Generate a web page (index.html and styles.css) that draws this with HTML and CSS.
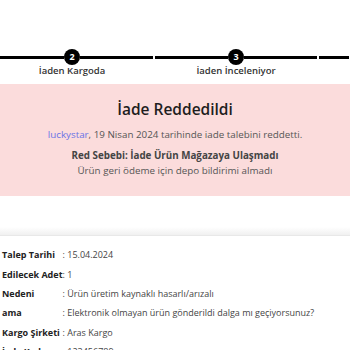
FILE: index.html
```html
<!DOCTYPE html>
<html lang="tr">
  <head>
    <meta charset="UTF-8" />
    <title>İade Detayı</title>
    <link rel="stylesheet" href="styles.css">
  </head>
  <body>
    <div class="steps">
      <div class="step">
        <div class="track">
          <span class="line"></span>
          <span class="dot">2</span>
          <span class="line"></span>
        </div>
        <div class="step-label">İaden Kargoda</div>
      </div>
      <div class="step">
        <div class="track">
          <span class="line"></span>
          <span class="dot">3</span>
          <span class="line"></span>
        </div>
        <div class="step-label">İaden İnceleniyor</div>
      </div>
      <div class="step step-last">
        <div class="track">
          <span class="line"></span>
        </div>
      </div>
    </div>

    <div class="rejected">
      <h2>İade Reddedildi</h2>
      <p class="who"><a href="#">luckystar</a>, 19 Nisan 2024 tarihinde iade talebini reddetti.</p>
      <p class="reason-title">Red Sebebi: İade Ürün Mağazaya Ulaşmadı</p>
      <p class="reason">Ürün geri ödeme için depo bildirimi almadı</p>
    </div>

    <div class="divider"></div>

    <table class="details">
      <tr><th>Talep Tarihi</th><td>: 15.04.2024</td></tr>
      <tr><th>Edilecek Adet</th><td>: 1</td></tr>
      <tr><th>Nedeni</th><td>: Ürün üretim kaynaklı hasarlı/arızalı</td></tr>
      <tr><th>ama</th><td>: Elektronik olmayan ürün gönderildi dalga mı geçiyorsunuz?</td></tr>
      <tr><th>Kargo Şirketi</th><td>: Aras Kargo</td></tr>
      <tr><th>İade Kodu</th><td>: 123456789</td></tr>
    </table>
  </body>
</html>
```

FILE: styles.css
```css
body {
  margin: 0;
  font-family: "Open Sans", "Noto Sans", sans-serif;
  color: #333;
  background: #fff;
  overflow: hidden;
  height: 350px;
}

/* Steps */
.steps {
  display: flex;
  margin: 0 0 0 -10px;
  padding-top: 49px;
  height: 35px;
}

.step {
  flex: 0 0 164px;
  display: flex;
  flex-direction: column;
  align-items: center;
}

.step-last {
  flex: 1;
}

.track {
  display: flex;
  align-items: center;
  width: 100%;
  height: 16px;
  padding: 0 1px;
  box-sizing: border-box;
}

.line {
  flex: 1;
  height: 3px;
  background: #000;
}

.dot {
  width: 16px;
  height: 16px;
  border-radius: 50%;
  background: #000;
  color: #fff;
  font-size: 9px;
  font-weight: bold;
  line-height: 16px;
  text-align: center;
}

.step-label {
  margin-top: 0;
  font-size: 9.5px;
  font-weight: 600;
  line-height: 11px;
  color: #333;
}

/* Rejected box */
.rejected {
  background: #fbdcdc;
  text-align: center;
  padding: 13px 0 0;
  height: 99px;
}

.rejected h2 {
  margin: 0;
  font-size: 15.5px;
  font-weight: 600;
  color: #1e1e1e;
  line-height: 24px;
}

.rejected p {
  margin: 0;
  font-size: 9.8px;
}

.rejected .who {
  margin-top: 7px;
  color: #555;
  line-height: 14px;
}

.rejected .who a {
  color: #6a73e6;
  text-decoration: none;
}

.rejected .reason-title {
  margin-top: 7px;
  font-weight: bold;
  color: #444;
  line-height: 14px;
}

.rejected .reason {
  margin-top: 1px;
  color: #555;
  line-height: 14px;
}

.divider {
  margin-top: 31px;
  height: 8px;
  background: linear-gradient(#fff, #f0f0f0);
  border-bottom: 1px solid #e8e8e8;
}

/* Details */
.details {
  margin: 9px 0 0 2px;
  border-collapse: collapse;
  font-size: 9px;
}

.details th {
  text-align: left;
  font-weight: bold;
  color: #222;
  padding: 0;
  height: 19.4px;
  white-space: nowrap;
}

.details td {
  color: #444;
  padding: 0;
  white-space: nowrap;
}
```
